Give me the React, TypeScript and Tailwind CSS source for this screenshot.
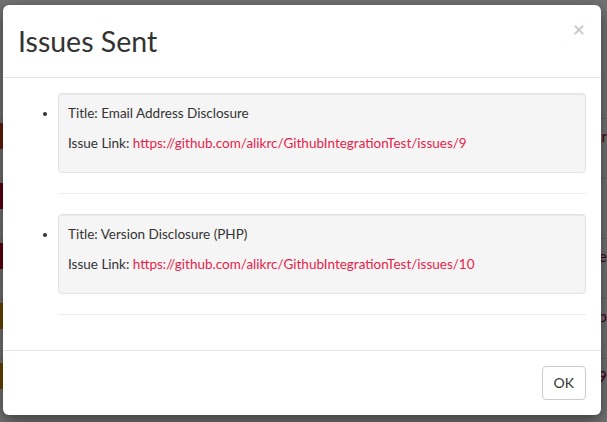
import React from "react";

const issues = [
  { title: "Email Address Disclosure", link: "https://github.com/alikrc/GithubIntegrationTest/issues/9" },
  { title: "Version Disclosure (PHP)", link: "https://github.com/alikrc/GithubIntegrationTest/issues/10" },
];

const bgRows = [
  { color: "bg-[#e8401c]", text: "ar" },
  { color: "bg-[#d0021b]", text: "" },
  { color: "bg-[#d0021b]", text: "te" },
  { color: "bg-[#e89a00]", text: "p" },
  { color: "bg-[#e89a00]", text: "9" },
];

function BackgroundPage() {
  return (
    <div className="min-h-[422px] w-full bg-white pt-[118px]">
      {bgRows.map((row, i) => (
        <div key={i} className="flex h-[60px] items-start justify-between border-t border-[#ddd]">
          <div className={`mt-[4px] h-[26px] w-[20px] ${row.color}`} />
          <div className="mt-[6px] text-[15px] text-[#a0002a]">{row.text}</div>
        </div>
      ))}
    </div>
  );
}

export default function App() {
  return (
    <div className="relative h-[422px] w-[607px] overflow-hidden font-['Lato','Open_Sans',sans-serif] text-[13.5px] text-[#333]">
      <BackgroundPage />
      <div className="absolute inset-0 bg-black/55" />
      <div className="absolute left-[3px] top-[5px] w-[598px] rounded-[6px] bg-white shadow-[0_5px_15px_rgba(0,0,0,0.5)]">
        <div className="flex items-start justify-between border-b border-[#e5e5e5] p-[15px]">
          <h4 className="text-[28.5px] leading-[42px] text-[#333]">Issues Sent</h4>
          <button className="mr-[1px] mt-[-2px] text-[21px] font-bold leading-none text-black opacity-20">×</button>
        </div>
        <div className="p-[15px]">
          <ul className="list-disc pl-[40px]">
            {issues.map((issue, i) => (
              <li key={i}>
                <div className="mb-[20px] rounded-[4px] border border-[#e3e3e3] bg-[#f5f5f5] p-[9px] leading-[20px] shadow-[inset_0_1px_1px_rgba(0,0,0,0.05)]">
                  <p className="mb-[10px]">Title: {issue.title}</p>
                  <p className="mb-[10px]">
                    Issue Link: <a className="text-[#e8234a]" href="#">{issue.link}</a>
                  </p>
                </div>
                <hr className="mb-[20px] border-t border-[#eee]" />
              </li>
            ))}
          </ul>
        </div>
        <div className="flex justify-end border-t border-[#e5e5e5] p-[15px]">
          <button className="h-[34px] rounded-[4px] border border-[#ccc] bg-white px-[11px] text-[14px] leading-[20px] text-[#333]">OK</button>
        </div>
      </div>
    </div>
  );
}
